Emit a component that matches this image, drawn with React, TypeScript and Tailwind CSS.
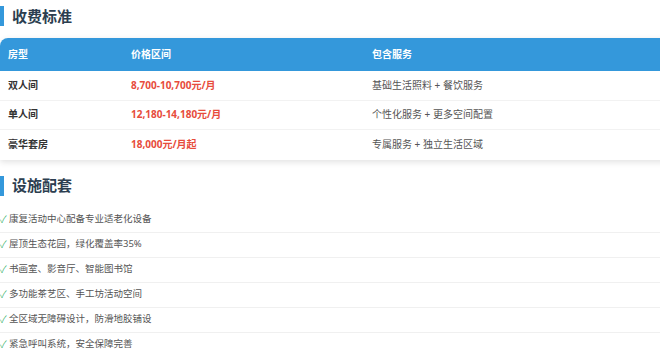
import React from 'react';

const ROWS = [
  { type: '双人间', price: '8,700-10,700元/月', service: '基础生活照料 + 餐饮服务' },
  { type: '单人间', price: '12,180-14,180元/月', service: '个性化服务 + 更多空间配置' },
  { type: '豪华套房', price: '18,000元/月起', service: '专属服务 + 独立生活区域' },
];

const FACILITIES = [
  '康复活动中心配备专业适老化设备',
  '屋顶生态花园，绿化覆盖率35%',
  '书画室、影音厅、智能图书馆',
  '多功能茶艺区、手工坊活动空间',
  '全区域无障碍设计，防滑地胶铺设',
  '紧急呼叫系统，安全保障完善',
];

const SectionTitle: React.FC<{ title: string }> = ({ title }) => (
  <h2 className="flex items-center h-[20px] border-l-4 border-[#3498db] pl-[8px] text-[15px] leading-none font-bold text-[#2c3e50]">
    {title}
  </h2>
);

export default function App() {
  return (
    <div
      className="w-[660px] h-[357px] overflow-hidden bg-white"
      style={{ fontFamily: '"Noto Sans", "Noto Sans CJK SC", sans-serif' }}
    >
      <div className="w-[680px] pt-[6px]">
        <SectionTitle title="收费标准" />

        <div className="mt-[12px] rounded-tl-[8px] rounded-tr-[8px] bg-white shadow-[0_2px_6px_rgba(0,0,0,0.12)] overflow-hidden">
          <div className="flex items-center h-[33px] bg-[#3498db] text-white text-[10px] font-bold">
            <div className="w-[131px] pl-[8px]">房型</div>
            <div className="w-[241px]">价格区间</div>
            <div className="flex-1">包含服务</div>
          </div>
          {ROWS.map((row, i) => (
            <div
              key={row.type}
              className={`flex items-center h-[29.5px] text-[10px] ${i < ROWS.length - 1 ? 'border-b border-[#f2f2f2]' : ''}`}
            >
              <div className="w-[131px] pl-[8px] font-bold text-[#333]">{row.type}</div>
              <div className="w-[241px] font-bold text-[#e74c3c]">{row.price}</div>
              <div className="flex-1 text-[#555]">{row.service}</div>
            </div>
          ))}
        </div>

        <div className="mt-[16px]">
          <SectionTitle title="设施配套" />
        </div>

        <ul className="mt-[12px]">
          {FACILITIES.map((item) => (
            <li
              key={item}
              className="flex items-center h-[25px] border-b border-[#f0f0f0] text-[9.5px] text-[#555]"
            >
              <span className="w-[9px] text-[#27ae60] text-[10px] font-light">✓</span>
              {item}
            </li>
          ))}
        </ul>
      </div>
    </div>
  );
}
